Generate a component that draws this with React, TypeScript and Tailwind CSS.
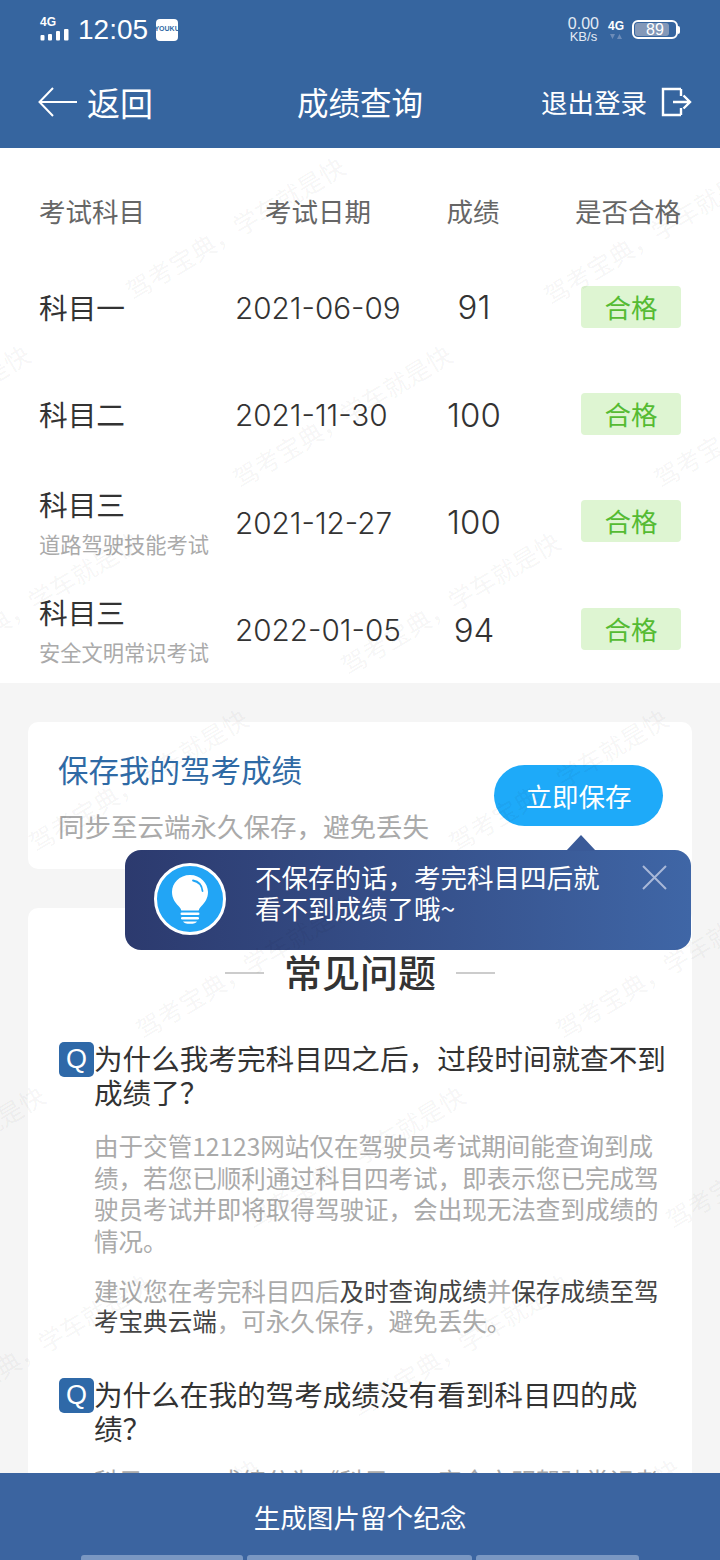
import React from "react";

const marks = [
  [235, 228], [653, 233],
  [-80, 416], [342, 416], [763, 416],
  [30, 603], [450, 603],
  [138, 780], [558, 780],
  [245, 967], [665, 967],
  [-65, 1157], [355, 1157], [775, 1157],
  [40, 1345], [460, 1345],
  [150, 1530], [570, 1530],
];

const rows = [
  { name: "科目一", date: "2021-06-09", score: "91" },
  { name: "科目二", date: "2021-11-30", score: "100" },
  { name: "科目三", sub: "道路驾驶技能考试", date: "2021-12-27", score: "100" },
  { name: "科目三", sub: "安全文明常识考试", date: "2022-01-05", score: "94" },
];

// full-width punctuation
const CM = "\uFF0C";
const QM = "\uFF1F";
const CL = "\uFF1A";

const Signal = () => (
  <div className="flex flex-col items-start w-[30px]">
    <span className="text-[12px] leading-[11px] font-bold text-white font-['Liberation_Sans',sans-serif]">4G</span>
    <svg width="30" height="14" viewBox="0 0 30 14" fill="white">
      <rect x="0.500" y="7" width="4" height="5.500" rx="1" />
      <rect x="8" y="6" width="4" height="6.500" rx="1" />
      <rect x="16" y="3" width="4" height="9.500" rx="1" />
      <rect x="24" y="1" width="4.500" height="11.500" rx="1" />
    </svg>
  </div>
);

const Battery = () => (
  <div className="flex items-center">
    <div className="relative w-[46px] h-[19px] rounded-[6px] border-2 border-white p-[1px]">
      <div className="w-[34px] h-full rounded-[3px] bg-[#8398b8]" />
      <span className="absolute inset-0 flex items-center justify-center text-[16px] leading-none text-white font-['Liberation_Sans',sans-serif]">
        89
      </span>
    </div>
    <div className="w-[2px] h-[8px] rounded-r-sm bg-white" />
  </div>
);

const Bulb = () => (
  <div className="-mt-[2px] shrink-0 w-[72px] h-[72px] rounded-full bg-[#22a5f5] border-[3px] border-white flex items-center justify-center">
    <svg width="40" height="50" viewBox="0 0 40 50">
      <path d="M20 1C9.500 1 2 9 2 18c0 6.500 3.200 10.500 6.500 14 1.600 1.700 2.500 3 2.800 4.500h17.400c.3-1.500 1.200-2.800 2.800-4.500 3.300-3.500 6.500-7.500 6.500-14C37.800 9 30.500 1 20 1z" fill="white" />
      <path d="M23 6.500c5.500 1 9 5 9.500 10.500" fill="none" stroke="#22a5f5" strokeWidth="1.800" strokeLinecap="round" />
      <rect x="10.500" y="38.500" width="19" height="2.600" rx="1.300" fill="white" />
      <rect x="11" y="43" width="18" height="2.600" rx="1.300" fill="white" />
      <path d="M13 47.500h14c-1 1.500-3 2.300-7 2.300s-6-.8-7-2.300z" fill="white" />
    </svg>
  </div>
);

const QBadge = () => (
  <span className="shrink-0 w-[35px] h-[35px] mt-[1px] rounded-[5px] bg-[#2f69a8] text-white text-[27px] leading-[35px] text-center font-['Liberation_Sans',sans-serif]">
    Q
  </span>
);

const App = () => {
  return (
    <div className="relative w-[720px] h-[1560px] overflow-hidden flex flex-col bg-[#f5f5f5] font-['Noto_Sans_CJK_SC',sans-serif]">
      <header className="relative z-20 h-[148px] shrink-0 bg-[#36659f] text-white">
        <div className="h-[58px] flex items-center justify-between pl-[40px] pr-[40px] pt-[1px]">
          <div className="flex items-center">
            <Signal />
            <span className="ml-[8px] text-[28px] leading-none font-['Liberation_Sans',sans-serif]">12:05</span>
            <span className="ml-[8px] w-[22px] h-[22px] rounded-[4px] bg-white text-[#2f6aa5] text-[7px] font-bold flex items-center justify-center font-['Liberation_Sans',sans-serif]">
              YOUKU
            </span>
          </div>
          <div className="flex items-center font-['Liberation_Sans',sans-serif]">
            <div className="flex flex-col items-center text-[#e4ebf4]">
              <span className="text-[16px] leading-[14px]">0.00</span>
              <span className="text-[13px] leading-[12px]">KB/s</span>
            </div>
            <div className="ml-[9px] flex flex-col items-center">
              <span className="text-[12px] leading-[13px] font-bold">4G</span>
              <svg width="12" height="7" viewBox="0 0 12 7" fill="#6d8cb8">
                <path d="M0 1h5L2.500 6zM7 6h5L9.500 1z" />
              </svg>
            </div>
            <div className="ml-[8px]">
              <Battery />
            </div>
          </div>
        </div>
        <div className="h-[88px] grid grid-cols-[1fr_auto_1fr] items-center px-[28px]">
          <div className="flex items-center pl-[10px]">
            <svg width="40" height="32" viewBox="0 0 40 32" fill="none" stroke="white" strokeWidth="2">
              <path d="M15 2 1.500 16 15 30M2 16h37" />
            </svg>
            <span className="ml-[9px] text-[33px] leading-none">返回</span>
          </div>
          <h1 className="text-[31.500px] leading-none font-normal">成绩查询</h1>
          <div className="flex items-center justify-end">
            <span className="text-[26.500px] leading-none">退出登录</span>
            <svg className="ml-[14px]" width="31" height="30" viewBox="0 0 31 30" fill="none" stroke="white" strokeWidth="2.400">
              <path d="M20 2H2v26h18M20 2v7M20 28v-7M12 15h17M22.500 8.500 29 15l-6.500 6.500" />
            </svg>
          </div>
        </div>
      </header>

      <main className="flex-1 overflow-hidden">
        <section className="h-[535px] bg-white pt-[39px] pl-[39px]">
          <div className="grid grid-cols-[196px_166px_144px_172px] h-[48px] mb-[18px] items-center text-[26.500px] text-[#666]">
            <span>考试科目</span>
            <span className="text-center">考试日期</span>
            <span className="text-center">成绩</span>
            <span className="text-center whitespace-nowrap pr-[6px]">是否合格</span>
          </div>
          {rows.map((row, i) => (
            <div key={i} className="grid grid-cols-[196px_166px_144px_172px] h-[107.400px] items-center text-[#333]">
              <div className="flex flex-col">
                <span className="text-[28.700px] leading-[36px]">{row.name}</span>
                {row.sub && <span className="mt-[8px] -mb-[2px] text-[21.250px] leading-[28px] text-[#aaa]">{row.sub}</span>}
              </div>
              <span className="mt-[3px] text-[29.700px] font-light font-['Inter',sans-serif] whitespace-nowrap">{row.date}</span>
              <span className="mt-[3px] pl-[2px] text-center text-[33px] font-light font-['Inter',sans-serif]">{row.score}</span>
              <div className="flex justify-center">
                <span className="w-[100px] h-[42px] rounded-[4px] bg-[#def5d2] text-[#55bb33] text-[26.500px] leading-[42px] text-center">合格</span>
              </div>
            </div>
          ))}
        </section>

        <section className="relative mt-[39px] mx-[28px] h-[147px] rounded-[10px] bg-white flex justify-between pl-[30px] pr-[29px]">
          <div className="pt-[27px]">
            <h2 className="text-[30.500px] leading-[40px] font-normal text-[#2f6aa5]">保存我的驾考成绩</h2>
            <p className="mt-[17px] text-[26.500px] leading-[40px] text-[#aaa] whitespace-nowrap">{`同步至云端永久保存${CM}避免丢失`}</p>
          </div>
          <button className="mt-[43px] w-[169px] h-[61px] rounded-full bg-[#1eaaf9] text-white text-[26.500px]">立即保存</button>

          <div className="absolute left-[97px] top-[128px] w-[566px] h-[100px] rounded-[16px] bg-gradient-to-r from-[#2c3a6e] to-[#3f66a6] flex items-center pl-[29px]">
            <div className="absolute left-[441px] -top-[15px] w-0 h-0 border-x-[15px] border-x-transparent border-b-[16px] border-b-[#3a5a98]" />
            <Bulb />
            <p className="ml-[29px] -mt-[16px] text-[26.500px] leading-[31px] text-white whitespace-nowrap">
              {`不保存的话${CM}考完科目四后就`}
              <br />
              看不到成绩了哦~
            </p>
            <svg className="absolute right-[24px] top-[15px]" width="25" height="25" viewBox="0 0 25 25" stroke="#a9b8d8" strokeWidth="2">
              <path d="M1 1l23 23M24 1 1 24" />
            </svg>
          </div>
        </section>

        <section className="mt-[39px] mx-[28px] h-[640px] rounded-[10px] bg-white">
          <div className="pt-[39px] h-[133px] flex justify-center gap-[20px]">
            <span className="w-[39px] h-[2px] mt-[25px] bg-[#ccc]" />
            <h2 className="text-[38px] leading-[48px] font-medium text-[#333]">常见问题</h2>
            <span className="w-[39px] h-[2px] mt-[25px] bg-[#ccc]" />
          </div>
          <div className="pl-[31px] pr-[24px]">
            <div className="flex">
              <QBadge />
              <h3 className="text-[28.600px] leading-[34px] font-normal text-[#333]">{`为什么我考完科目四之后${CM}过段时间就查不到成绩了${QM}`}</h3>
            </div>
            <div className="pl-[35px] pr-[5px] text-[24.560px] leading-[31.500px] text-[#aaa]">
              <p className="mt-[21px]">{`由于交管12123网站仅在驾驶员考试期间能查询到成绩${CM}若您已顺利通过科目四考试${CM}即表示您已完成驾驶员考试并即将取得驾驶证${CM}会出现无法查到成绩的情况。`}</p>
              <p className="mt-[20px] leading-[29.500px]">
                建议您在考完科目四后<span className="text-[#444]">及时查询成绩</span>并<span className="text-[#444]">保存成绩至驾考宝典云端</span>{`${CM}可永久保存${CM}避免丢失。`}
              </p>
            </div>
            <div className="flex mt-[42px]">
              <QBadge />
              <h3 className="text-[28.600px] leading-[34px] font-normal text-[#333]">{`为什么在我的驾考成绩没有看到科目四的成绩${QM}`}</h3>
            </div>
            <p className="mt-[20px] pl-[35px] text-[24.560px] leading-[31.500px] text-[#aaa]">{`科目一、二成绩分为《科目一${CL}安全文明驾驶常识考试》`}</p>
          </div>
        </section>
      </main>

      <div className="absolute inset-0 z-10 pointer-events-none">
        {marks.map(([x, y], i) => (
          <span
            key={i}
            className="absolute -translate-x-1/2 -translate-y-1/2 -rotate-[31deg] whitespace-nowrap text-[25px] text-[#000]/[0.05]"
            style={{ left: x, top: y }}
          >
            {`驾考宝典${CM}学车就是快`}
          </span>
        ))}
      </div>

      <footer className="relative z-20 h-[87px] shrink-0 bg-[#3b64a0] text-white flex flex-col items-center">
        <div className="flex-1 pt-[6px] flex items-center text-[26.600px]">生成图片留个纪念</div>
        <div className="h-[5px] flex gap-[4px]">
          <span className="w-[162px] rounded-t-[3px] bg-[#7a97c2]" />
          <span className="w-[225px] rounded-t-[3px] bg-[#7a97c2]" />
          <span className="w-[163px] rounded-t-[3px] bg-[#7a97c2]" />
        </div>
      </footer>
    </div>
  );
};

export default App;
